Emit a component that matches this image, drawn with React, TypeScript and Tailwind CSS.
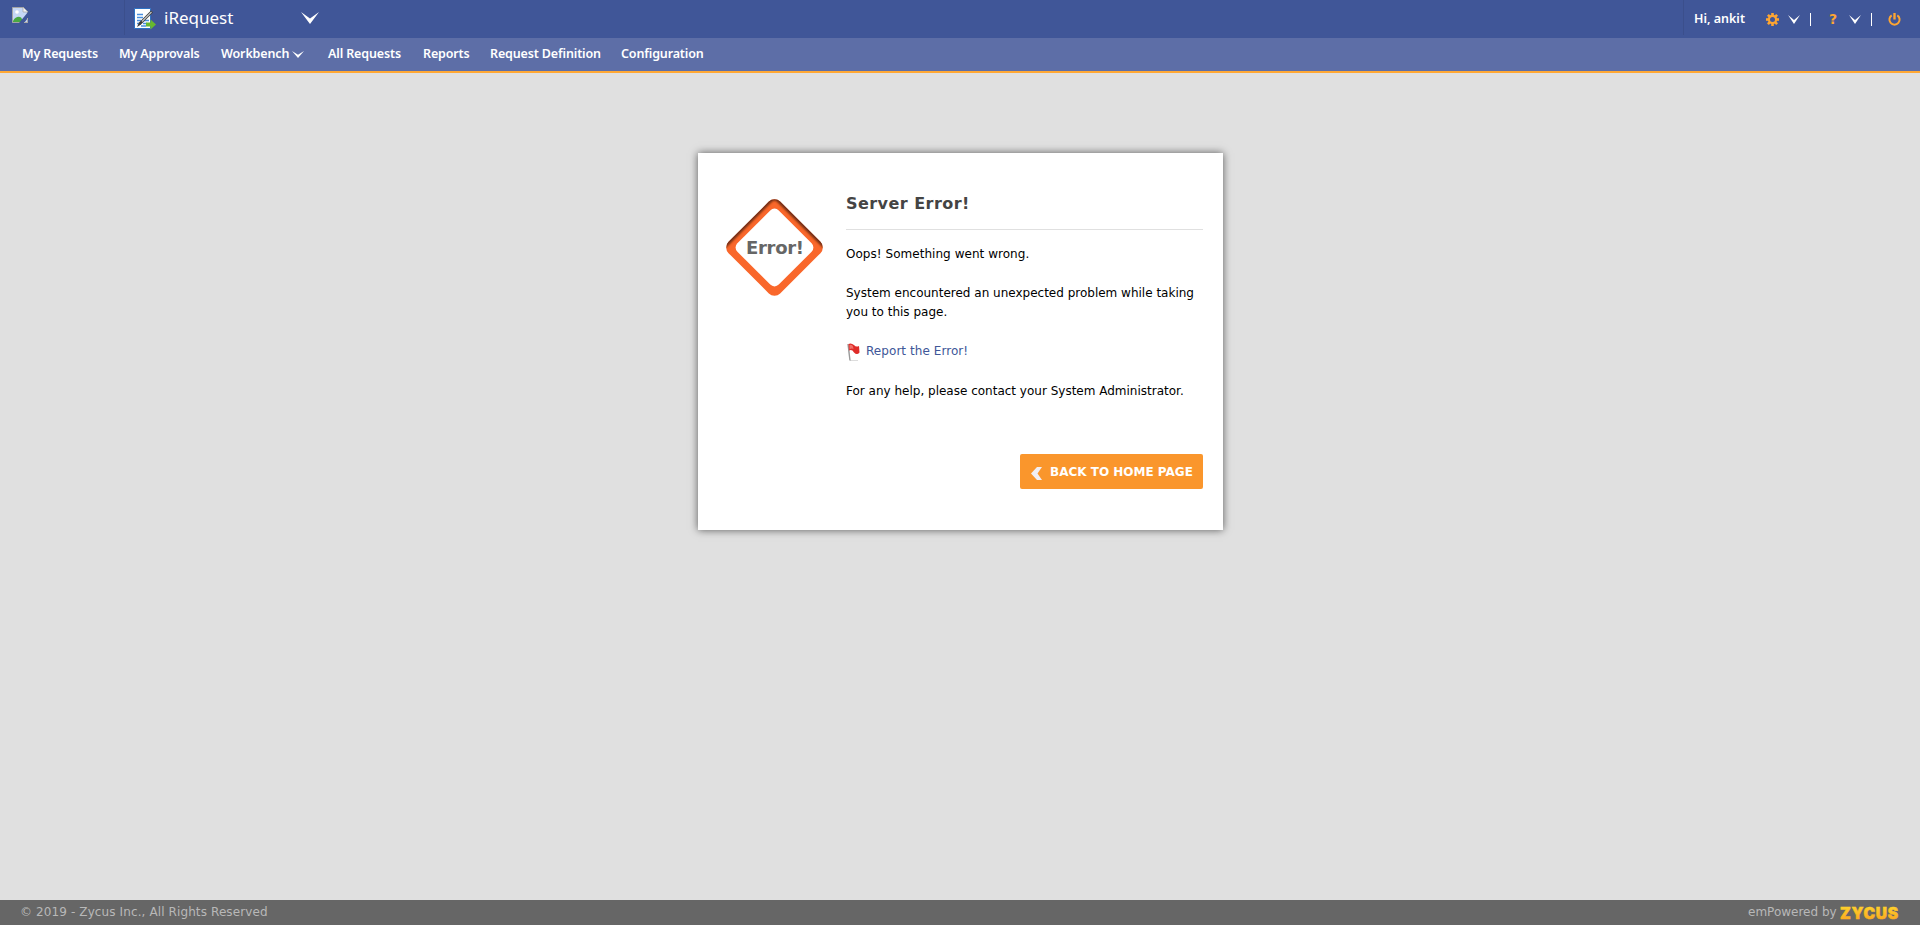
import React from 'react';

const Chevron = ({ className }: { className: string }) => (
  <svg className={className} viewBox="0 0 18 12" preserveAspectRatio="none">
    <path d="M0 0 L9 6.500 L18 0 L9 12 Z" fill="#fff" />
  </svg>
);

const navItems = [
  { label: 'My Requests', cls: 'w-[77px] mr-[20px]' },
  { label: 'My Approvals', cls: 'w-[81px] mr-[21px]' },
  { label: 'Workbench', cls: 'w-[67px] mr-[4px]', menu: true },
  { label: 'All Requests', cls: 'w-[75px] mr-[20px]' },
  { label: 'Reports', cls: 'w-[47px] mr-[20px]' },
  { label: 'Request Definition', cls: 'w-[111px] mr-[20px]' },
  { label: 'Configuration', cls: 'w-[82px]' },
];

const BrokenImage = () => (
  <svg className="h-4 w-4 shrink-0" viewBox="0 0 16 16">
    <path d="M.5.5H11L15.5 5V15.5H.5Z" fill="#c6d7f5" stroke="#a5a5a5" />
    <path d="M11 0V5H16Z" fill="#f3f3f3" stroke="#a5a5a5" strokeWidth=".7" />
    <circle cx="5" cy="5" r="1.8" fill="#fff" />
    <path d="M1 15V14C3 10 7 9 9 10.500L12 15Z" fill="#49a842" />
    <path d="M16 5V11L12 16H7Z" fill="#405698" />
    <path d="M12 15.500H15.500V11" fill="none" stroke="#aaa" />
  </svg>
);

const DocumentIcon = () => (
  <svg className="h-[22px] w-[22px] shrink-0" viewBox="0 0 22 22">
    <path d="M.5.5H16.500V20.500H.5Z" fill="#fff" stroke="#2e72c4" />
    <path d="M3 6.500H9M3 9.500H9M3 12.500H7M10 12.500H15M3 15.500H5M9 15.500H13M7 18H12" stroke="#4a8fdf" strokeWidth="1.400" />
    <path d="M3 19L5 14.500L17 2.500L19 4.500L7 16.500Z" fill="#3c3c3c" />
    <path d="M8 13.500L17.500 4" stroke="#c5c5c5" strokeWidth="1.200" />
    <path d="M12 14.500H16.500V11.500L22 16.500L16.500 21.500V18.500H12Z" fill="#67b82f" />
  </svg>
);

const GearIcon = () => (
  <svg className="h-[13px] w-[13px] shrink-0" viewBox="0 0 13 13">
    <g fill="#fda532">
      <rect x="5.200" width="2.600" height="13" />
      <rect x="5.200" width="2.600" height="13" transform="rotate(45 6.500 6.500)" />
      <rect x="5.200" width="2.600" height="13" transform="rotate(90 6.500 6.500)" />
      <rect x="5.200" width="2.600" height="13" transform="rotate(135 6.500 6.500)" />
      <circle cx="6.500" cy="6.500" r="4.700" />
    </g>
    <circle cx="6.500" cy="6.500" r="2.500" fill="#405698" />
  </svg>
);

const PowerIcon = () => (
  <svg className="h-[13px] w-[13px] shrink-0" viewBox="0 0 13 13" fill="none" stroke="#fda532">
    <path d="M3.700 2.300A5.100 5.100 0 1 0 9.300 2.300" strokeWidth="2" />
    <path d="M6.500 0V6.500" strokeWidth="2.400" />
  </svg>
);

const ErrorSign = () => (
  <svg className="h-[98px] w-[98px]" viewBox="0 0 98 98">
    <defs>
      <clipPath id="diamond">
        <rect x="12" y="12" width="73" height="73" rx="8" transform="rotate(45 48.500 48.500)" />
      </clipPath>
      <filter id="soft" x="-20%" y="-20%" width="140%" height="140%"><feGaussianBlur stdDeviation="1.300" /></filter>
    </defs>
    <g clipPath="url(#diamond)">
      <rect width="98" height="98" fill="#f9672b" />
      <path d="M-3 47L44 0Q48.500 -4 53 0L100 47" fill="none" stroke="#6b2c12" strokeWidth="6.500" filter="url(#soft)" />
    </g>
    <rect x="19.250" y="19.250" width="58.500" height="58.500" rx="6" fill="#fff" transform="rotate(45 48.500 48.500)" />
    <text x="49" y="55" textAnchor="middle" textLength="58" fontFamily="DejaVu Sans, sans-serif" fontWeight="700" fontSize="18" fill="#666">Error!</text>
  </svg>
);

const FlagIcon = () => (
  <svg className="h-[18px] w-[14px] shrink-0" viewBox="0 0 14 18">
    <path d="M3 17.500H11" stroke="#ddd" />
    <path d="M1 1L3 17.500" stroke="#999" strokeWidth="1.400" />
    <path d="M1.500 1Q4-.5 7 2Q9 4.500 12 3L12.500 9.500Q10 12.500 7 9.500Q5 6 2 7.500Z" fill="#df2c29" />
    <path d="M2.500 2Q5 1 6 3.500L6.500 6Q4.500 5 2.500 6.500Z" fill="#f0716a" />
  </svg>
);

export default function App() {
  return (
    <div className="flex h-[925px] w-full flex-col overflow-hidden bg-[#e0e0e0] font-['DejaVu_Sans',sans-serif] text-[12px] text-black">
      <header className="flex h-[38px] shrink-0 bg-[#405698] pt-[7px] pl-3 text-white">
        <BrokenImage />
        <div className="-mt-[7px] ml-[96px] h-[35px] w-px bg-[#3b4f8c]" />
        <div className="ml-[9px] flex h-[24px] items-start pt-px"><DocumentIcon /></div>
        <div className="ml-[8px] w-[137px] text-[17px] leading-[22px] whitespace-nowrap font-['Noto_Sans',sans-serif]">iRequest</div>
        <Chevron className="mt-[5px] h-[12px] w-[18px]" />
        <div className="-mt-[7px] ml-auto h-[35px] w-px bg-[#3b4f8c]" />
        <div className="flex h-[24px] w-[236px] items-center pl-[10px]">
          <div className="w-[72px] pt-px font-['Noto_Sans',sans-serif] text-[12.5px] font-semibold whitespace-nowrap">Hi, ankit</div>
          <GearIcon />
          <Chevron className="ml-[9px] h-[9px] w-[12px]" />
          <div className="ml-[10px] h-[13px] w-px bg-white" />
          <div className="ml-[18px] w-[9px] text-[14px] leading-[13px] font-bold text-[#fda532]">?</div>
          <Chevron className="ml-[11px] h-[9px] w-[12px]" />
          <div className="ml-[10px] h-[13px] w-px bg-white" />
          <div className="ml-[16px] flex"><PowerIcon /></div>
        </div>
      </header>

      <nav className="flex h-[35px] shrink-0 border-b-2 border-[#ffa834] bg-[#5d6ea7] pl-[22px] font-['Noto_Sans',sans-serif] text-[12.5px] leading-[31px] font-semibold tracking-[-0.14px] text-white">
        {navItems.map((n) => (
          <div key={n.label} className="flex">
            <a className={`block whitespace-nowrap ${n.cls}`}>{n.label}</a>
            {n.menu && <Chevron className="mt-[13px] mr-[24px] h-[7px] w-[12px]" />}
          </div>
        ))}
      </nav>

      <main className="flex flex-1 items-start justify-center pt-[80px] pl-px">
        <section className="flex h-[377px] w-[525px] bg-white pl-[28px] shadow-[0_0_8px_rgba(0,0,0,0.6)]">
          <div className="w-[120px] shrink-0 pt-[46px]"><ErrorSign /></div>
          <div className="w-[357px] whitespace-nowrap">
            <h1 className="h-[77px] border-b border-[#e0e0e0] pt-[40px] text-[16px] leading-[22px] font-bold tracking-[0.45px] text-[#444]">Server Error!</h1>
            <p className="pt-[14px] leading-[20px] tracking-[0.04px]">Oops! Something went wrong.</p>
            <p className="pt-[20px] leading-[19px]">System encountered an unexpected problem while taking<br />you to this page.</p>
            <p className="flex pt-[19px] leading-[20px]">
              <span className="mt-[2px] mr-[5px] ml-px flex"><FlagIcon /></span>
              <a className="tracking-[0.06px] text-[#405698]">Report the Error!</a>
            </p>
            <p className="pt-[20px] leading-[20px]">For any help, please contact your System Administrator.</p>
            <div className="flex justify-end pt-[53px]">
              <button className="flex h-[35px] w-[183px] items-center rounded-[2px] bg-[#fa962c] pl-[11px] font-bold text-white">
                <svg className="mt-[3px] mr-[8px] h-[13px] w-[11px] shrink-0" viewBox="0 0 11 13"><path d="M6 0H11L6.500 6.500L11 13H6L0 6.500Z" fill="#f1eef3" /></svg>
                BACK TO HOME PAGE
              </button>
            </div>
          </div>
        </section>
      </main>

      <footer className="flex h-[25px] shrink-0 items-center bg-[#666] pl-[20px] text-[#b8b8b8]">
        <span className="whitespace-nowrap pb-px tracking-[0.11px]">© 2019 - Zycus Inc., All Rights Reserved</span>
        <span className="ml-auto w-[92px] whitespace-nowrap pb-px">emPowered by</span>
        <svg className="mr-[20px] h-[18px] w-[60px] overflow-visible" viewBox="0 0 60 18">
          <defs><linearGradient id="gold" x1="0" y1="0" x2="0" y2="1"><stop stopColor="#ffda2d" /><stop offset="1" stopColor="#f9a11e" /></linearGradient></defs>
          <text x="0" y="14.500" textLength="58" fontFamily="Inter, sans-serif" fontWeight="900" fontSize="15.500" fill="url(#gold)" stroke="url(#gold)" strokeWidth=".5">ZYCUS</text>
        </svg>
      </footer>
    </div>
  );
}
